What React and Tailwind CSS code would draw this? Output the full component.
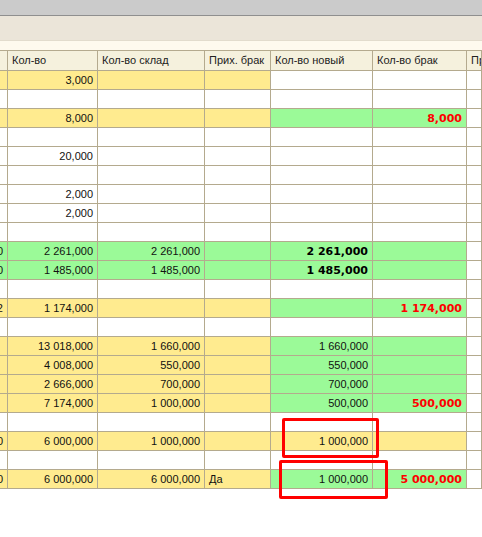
const Y = "bg-[#ffeb8f]";
const G = "bg-[#9bfa98]";
const W = "bg-white";

const widths = ["w-[8px]", "w-[90px]", "w-[107px]", "w-[66px]", "w-[102px]", "w-[94px]", "flex-1"];

const headers = ["", "Кол-во", "Кол-во склад", "Прих. брак", "Кол-во новый", "Кол-во брак", "Прих. новый"];

// "*" bold, "!" red bold, "<" left aligned
const rows = [
  { bg: [Y, Y, Y, Y, W, W, W], t: ["", "3,000"] },
  { bg: [W, W, W, W, W, W, W], t: [] },
  { bg: [Y, Y, Y, Y, G, G, W], t: ["", "8,000", "", "", "", "!8,000"] },
  { bg: [W, W, W, W, W, W, W], t: [] },
  { bg: [W, W, W, W, W, W, W], t: ["", "20,000"] },
  { bg: [W, W, W, W, W, W, W], t: [] },
  { bg: [W, W, W, W, W, W, W], t: ["", "2,000"] },
  { bg: [W, W, W, W, W, W, W], t: ["", "2,000"] },
  { bg: [W, W, W, W, W, W, W], t: [] },
  { bg: [G, G, G, G, G, G, W], t: ["2 261,000", "2 261,000", "2 261,000", "", "*2 261,000"] },
  { bg: [G, G, G, G, G, G, W], t: ["1 485,000", "1 485,000", "1 485,000", "", "*1 485,000"] },
  { bg: [W, W, W, W, W, W, W], t: [] },
  { bg: [Y, Y, Y, Y, G, G, W], t: ["12", "1 174,000", "", "", "", "!1 174,000"] },
  { bg: [W, W, W, W, W, W, W], t: [] },
  { bg: [Y, Y, Y, Y, G, G, W], t: ["", "13 018,000", "1 660,000", "", "1 660,000"] },
  { bg: [Y, Y, Y, Y, G, G, W], t: ["", "4 008,000", "550,000", "", "550,000"] },
  { bg: [Y, Y, Y, Y, G, G, W], t: ["", "2 666,000", "700,000", "", "700,000"] },
  { bg: [Y, Y, Y, Y, G, G, W], t: ["", "7 174,000", "1 000,000", "", "500,000", "!500,000"] },
  { bg: [W, W, W, W, W, W, W], t: [] },
  { bg: [Y, Y, Y, Y, Y, Y, W], t: ["1 000,000", "6 000,000", "1 000,000", "", "1 000,000"] },
  { bg: [W, W, W, W, W, W, W], t: [] },
  { bg: [Y, Y, Y, Y, G, G, W], t: ["1 000,000", "6 000,000", "6 000,000", "<Да", "1 000,000", "!5 000,000"] },
];

function Cell({ width, bg, text }) {
  let value = text || "";
  let kind = "n";
  if (value.startsWith("*")) { kind = "b"; value = value.slice(1); }
  if (value.startsWith("!")) { kind = "r"; value = value.slice(1); }
  if (value.startsWith("<")) { kind = "l"; value = value.slice(1); }

  const textCls =
    kind === "b"
      ? "font-bold text-black font-['DejaVu_Sans',sans-serif]"
      : kind === "r"
      ? "font-bold text-[#ff0000] font-['DejaVu_Sans',sans-serif]"
      : "text-[#111]";

  return (
    <div
      className={`${width} ${bg} h-full border-r border-[#b4aa8e] flex items-center overflow-hidden whitespace-nowrap ${
        kind === "l" ? "justify-start pl-[4px]" : "justify-end pr-[4px]"
      }`}
    >
      <span className={`${textCls} leading-[19px] pt-[1px]`}>{value}</span>
    </div>
  );
}

export default function App() {
  return (
    <div className="relative w-[482px] h-[537px] bg-white overflow-hidden font-['Liberation_Sans',Arial,sans-serif] text-[11px]">
      <div className="h-[15px] bg-[#cbcbcb]" />
      <div className="h-px bg-[#8f8f8f]" />
      <div className="h-[25px] bg-[#ebe5d9] border-b border-[#e2dccd]" />
      <div className="h-[9px] bg-[#fefaee]" />

      {/* header */}
      <div className="flex h-[21px] border-t border-b border-[#b4aa8e] bg-[#f5f1dd]">
        {headers.map((h, i) => (
          <div
            key={i}
            className={`${widths[i]} h-full border-r border-[#b4aa8e] flex items-center pl-[4px] overflow-hidden whitespace-nowrap text-[#222]`}
          >
            {i === 0 ? "" : h}
          </div>
        ))}
      </div>

      {rows.map((r, ri) => (
        <div key={ri} className="flex h-[19px] border-b border-[#b4aa8e]">
          {widths.map((w, ci) => (
            <Cell key={ci} width={w} bg={r.bg[ci]} text={r.t[ci]} />
          ))}
        </div>
      ))}

      {/* highlight boxes */}
      <div className="absolute left-[282px] top-[418px] w-[97px] h-[40px] border-[3px] border-[#ff0000] rounded-[2px]" />
      <div className="absolute left-[279px] top-[460px] w-[109px] h-[39px] border-[3px] border-[#ff0000] rounded-[2px]" />
    </div>
  );
}
